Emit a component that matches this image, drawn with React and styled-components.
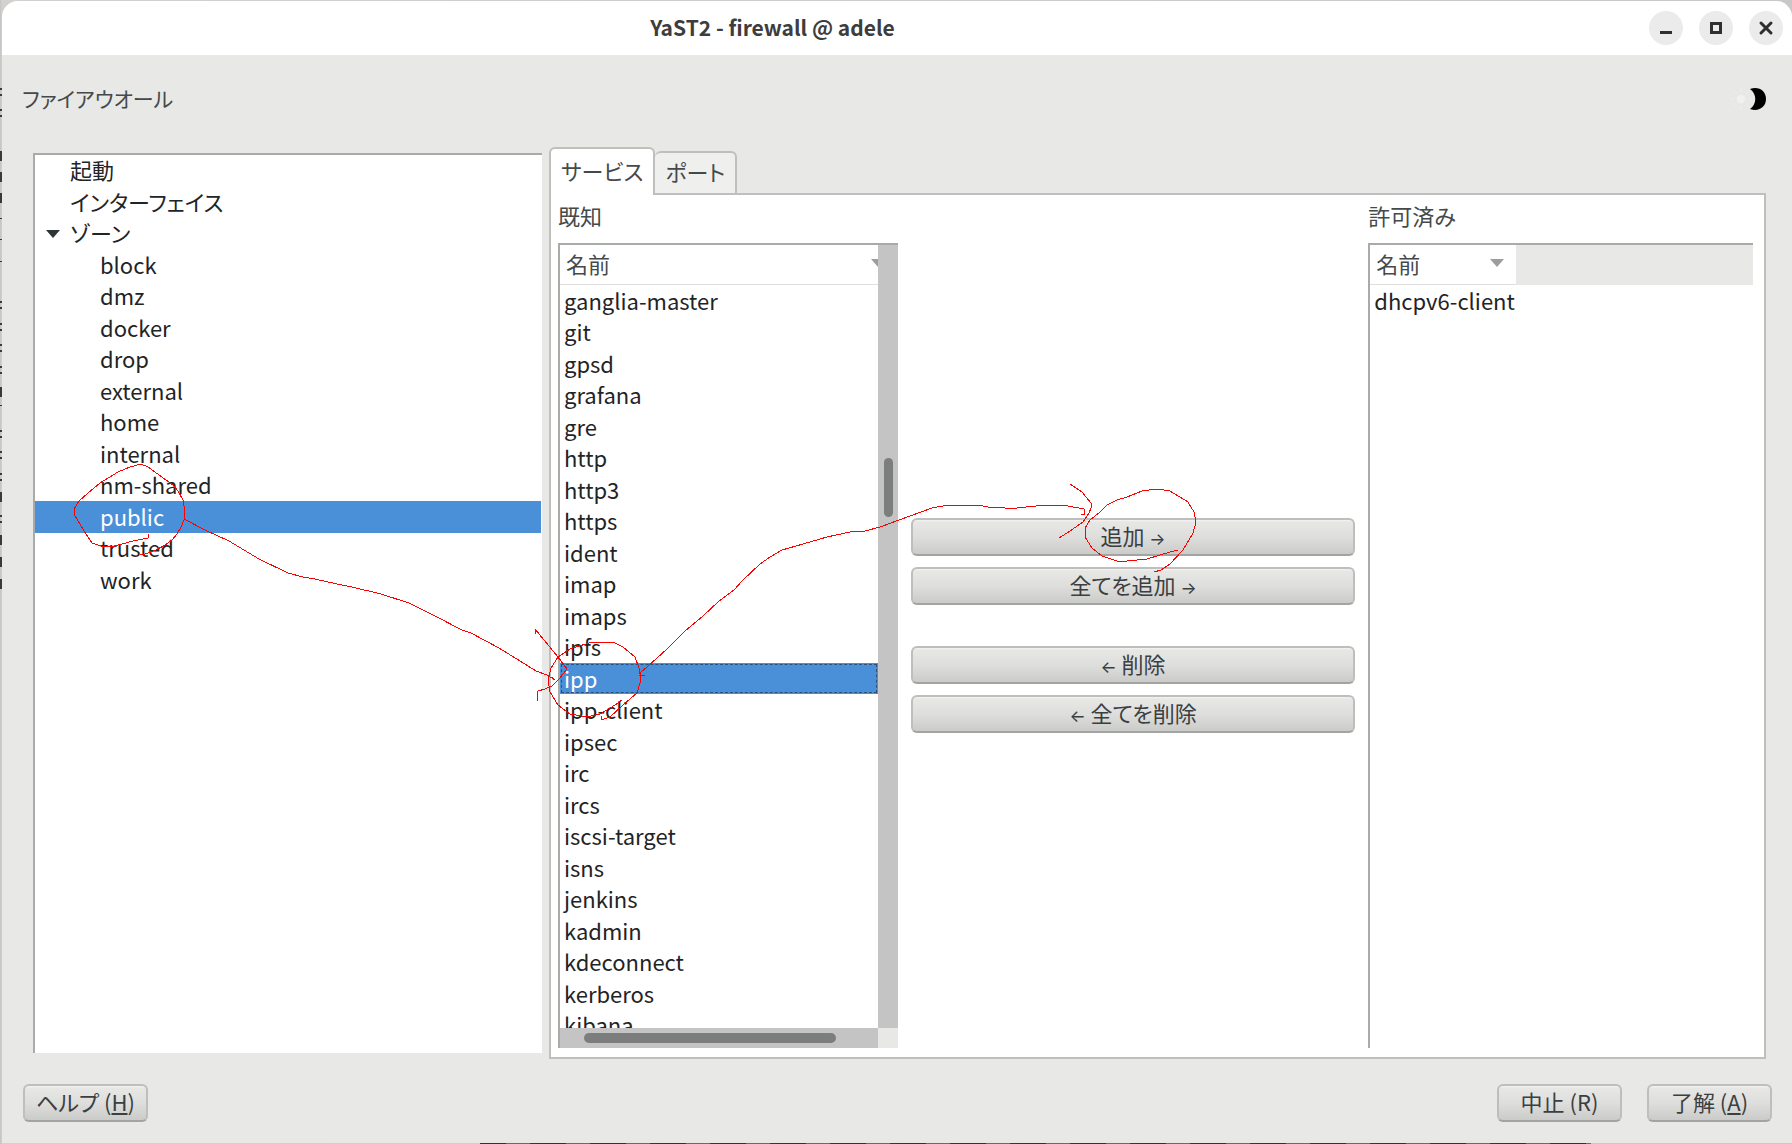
import React, { useState } from "react";
import styled, { createGlobalStyle, css } from "styled-components";

const GlobalStyle = createGlobalStyle`
  *, *::before, *::after { box-sizing: border-box; }
  html, body { margin: 0; padding: 0; }
  body {
    background: #c9c9c8;
    color: #2e3436;
    font-family: "Noto Sans CJK JP", "Noto Sans", sans-serif;
    font-size: 22px;
    line-height: 32px;
    font-feature-settings: "palt";
    overflow: hidden;
  }
  button { font: inherit; font-feature-settings: inherit; color: inherit; }
`;

const line = "#bec0bd";
const surface = "#e8e8e6";

const Desktop = styled.div`
  position: relative;
  height: 100vh;
  padding: 1px 0 1px 2px;
  background: linear-gradient(to right, #c4c3c2, #d2d1d0 2px, #c8c8c7);
`;

const Window = styled.div`
  display: flex;
  flex-direction: column;
  height: 100%;
  background: ${surface};
  border-radius: 16px 16px 0 0;
  overflow: hidden;
`;

const TitleBar = styled.header`
  display: flex;
  align-items: center;
  flex: none;
  height: 54px;
  padding: 0 9px 0 114px;
  background: #fff;
`;

const Title = styled.h1`
  flex: 1;
  margin: 0;
  padding: 0 220px 3px 0;
  text-align: center;
  font-size: 21px;
  font-weight: 700;
  color: #3d3d3d;
`;

const WindowControls = styled.div`
  display: flex;
  gap: 16px;
`;

const RoundButton = styled.button`
  display: grid;
  place-items: center;
  width: 34px;
  height: 34px;
  padding: 0;
  border: 0;
  border-radius: 50%;
  background: #ebebeb;
`;

const Heading = styled.div`
  display: flex;
  align-items: center;
  justify-content: space-between;
  flex: none;
  height: 92px;
  padding: 0 26px 4px 20px;
`;

const HeadingText = styled.h2`
  margin: 0;
  padding-bottom: 3px;
  font-size: 21px;
  font-weight: 400;
  color: #444a4c;
`;

const ThemeButton = styled.button`
  display: flex;
  padding: 0;
  border: 0;
  background: none;
`;

const Main = styled.main`
  display: grid;
  grid-template-columns: 509fr 1217fr;
  gap: 7px;
  flex: 1;
  min-height: 0;
  padding: 0 26px 0 31px;
`;

const Tree = styled.ul`
  margin: 6px 0;
  padding: 0;
  list-style: none;
  background: #fff;
  border: solid #a9aba8;
  border-width: 2px 0 0 2px;
  overflow: hidden;
  color: #1f2426;
`;

const selected = css`
  background: #4a90d9;
  color: #fff;
`;

const TreeRow = styled.li`
  display: flex;
  align-items: center;
  height: 31px;
  margin-right: 1px;
  padding: 0 0 3px ${(p) => (p.$depth ? 65 : 11)}px;
  ${(p) => p.$selected && selected}
  &:nth-child(even) { height: 32px; }
`;

const Twisty = styled.span`
  display: flex;
  width: 24px;
  padding-top: 3px;
`;

const TabArea = styled.section`
  display: flex;
  flex-direction: column;
  min-width: 0;
  min-height: 0;
`;

const TabStrip = styled.div`
  display: flex;
  align-items: flex-end;
  flex: none;
`;

const Tab = styled.button`
  position: relative;
  height: ${(p) => (p.$active ? 48 : 42)}px;
  margin-bottom: ${(p) => (p.$active ? -2 : 0)}px;
  padding: 0 10px 4px;
  border: 2px solid ${line};
  border-width: ${(p) => (p.$active ? "2px 2px 0 2px" : "2px 2px 0 0")};
  border-radius: 6px 6px 0 0;
  background: ${(p) => (p.$active ? "#fff" : "#efefee")};
  color: #444a4c;
  z-index: ${(p) => (p.$active ? 1 : 0)};
`;

const Panel = styled.div`
  display: grid;
  grid-template-columns: 340fr 445fr 385fr;
  gap: 13px;
  flex: 1;
  min-height: 0;
  padding: 6px 11px 9px 7px;
  background: #fff;
  border: 2px solid ${line};
`;

const ListColumn = styled.div`
  display: flex;
  flex-direction: column;
  min-width: 0;
  min-height: 0;
`;

const ListLabel = styled.div`
  flex: none;
  height: 42px;
  line-height: 28px;
  color: #444a4c;
`;

const ListFrame = styled.div`
  display: grid;
  grid-template-columns: 1fr auto;
  grid-template-rows: 1fr auto;
  flex: 1;
  min-height: 0;
  border: solid #a9aba8;
  border-width: 2px 0 0 2px;
`;

const Viewport = styled.div`
  min-width: 0;
  min-height: 0;
  overflow: hidden;
`;

const Table = styled.table`
  width: 100%;
  border-collapse: separate;
  border-spacing: 0;
  color: #1f2426;
`;

const HeadCell = styled.th`
  height: 40px;
  padding: 0;
  background: ${surface};
  text-align: left;
  font-weight: 400;
  color: #444a4c;
`;

const HeadFace = styled.div`
  display: flex;
  align-items: center;
  justify-content: space-between;
  width: ${(p) => p.$width};
  height: 40px;
  padding: 0 0 4px 6px;
  background: #fff;
  border-bottom: 1px solid #dededd;
`;

const SortMark = styled.svg`
  flex: none;
  margin-right: ${(p) => p.$inset}px;
`;

const Row = styled.tr`
  height: 31px;
  &:nth-child(even) { height: 32px; }
  ${(p) => p.$selected && selected}
`;

const Cell = styled.td`
  padding: 0 4px 2px;
  line-height: 28px;
  ${(p) =>
    p.$selected &&
    css`
      outline: 1px dashed #2c4f74;
      outline-offset: -2px;
    `}
`;

const VerticalTrack = styled.div`
  width: 20px;
  padding: 213px 5px 0 6px;
  background: #c3c4c3;
`;

const HorizontalTrack = styled.div`
  height: 20px;
  padding: 5px 42px 5px 24px;
  background: #c3c4c3;
`;

const Thumb = styled.div`
  width: 100%;
  height: ${(p) => p.$length || "100%"};
  border-radius: 5px;
  background: #7b7e7d;
`;

const Corner = styled.div`
  background: ${surface};
`;

const Actions = styled.div`
  display: flex;
  flex-direction: column;
  justify-content: center;
  gap: 11px;
  padding-top: 2px;
`;

const ActionGap = styled.div`
  height: 19px;
`;

const PushButton = styled.button`
  height: 38px;
  min-width: ${(p) => p.$min || 0}px;
  padding: 0 10px 3px;
  border: 2px solid #bebfbd;
  border-bottom-color: #a2a4a1;
  border-radius: 6px;
  background: linear-gradient(#f4f4f3, #e7e7e5 2px, #dededc 50%, #cbcbc9);
  color: #3a4042;
  line-height: 31px;
`;

const Arrow = styled.span`
  font-family: Inter, sans-serif;
  font-size: 17px;
  line-height: 1;
`;

const Footer = styled.footer`
  display: flex;
  align-items: center;
  gap: 25px;
  flex: none;
  height: 84px;
  padding: 4px 20px 0 21px;
`;

const Spacer = styled.div`
  flex: 1;
`;

const Overlay = styled.svg`
  position: absolute;
  left: 0;
  top: 0;
  pointer-events: none;
`;

const BottomEdge = styled.div`
  position: absolute;
  left: 480px;
  right: 201px;
  bottom: 0;
  height: 1px;
  background: repeating-linear-gradient(to right, #2f3433 0 26px, #4d7772 26px 50px, #343635 50px 60px);
`;

const zones = ["block", "dmz", "docker", "drop", "external", "home", "internal", "nm-shared", "public", "trusted", "work"];

const services = [
  "ganglia-master", "git", "gpsd", "grafana", "gre", "http", "http3", "https",
  "ident", "imap", "imaps", "ipfs", "ipp", "ipp-client", "ipsec", "irc", "ircs",
  "iscsi-target", "isns", "jenkins", "kadmin", "kdeconnect", "kerberos", "kibana",
];

const strokes = [
  "148,534 148,538 133,541 111,547 101,546 92,543 86,534 78,521 74,514 74,509 79,501 88,493 100,483 118,472 130,467 141,464 148,467 166,480 173,485 178,491 183,500 185,511 184,520 181,527 177,534 172,540 165,545 156,550 145,554 140,554",
  "184,519 205,530 229,541 259,559 288,573 303,577 315,579 337,584 352,587 381,594 409,603 435,616 462,630 471,633 499,648 520,661 536,671 547,675 555,680 552,677",
  "535,634 535,629 558,657 567,669 559,679 552,686 545,689 538,691 537,701",
  "622,700 615,705 600,714 587,717 570,714 558,705 550,692 548,680 551,668 558,657 570,649 592,642 613,642 623,647 635,657 639,668 641,680 637,693 623,705 610,717 601,720 601,716",
  "645,675 640,675 641,672 647,667 667,649 685,631 703,616 718,602 735,589 742,581 760,564 770,557 782,550 803,544 827,537 850,532 865,531 880,527 910,516 932,508 948,505 977,505 988,507 1005,508 1017,508 1045,505 1068,506 1084,509 1084,514 1081,514",
  "1070,484 1082,492 1091,503 1091,508 1089,513 1083,522 1070,531 1059,538",
  "1178,550 1170,552 1147,559 1127,561 1117,561 1102,556 1092,548 1085,537 1085,528 1090,520 1100,512 1107,505 1117,500 1127,497 1142,491 1157,489 1170,491 1188,502 1194,512 1196,522 1193,533 1183,550 1170,564 1161,570 1154,572",
];

const glyphEdges = [
  [92, "c"], [113, "c"], [156, "i"], [177, "i"], [198, "i"], [219, "-"], [240, "-"], [262, "-"],
  [305, "c"], [327, "c"], [348, "c"], [370, "c"], [392, "i"], [406, "-"], [434, "c"], [455, "c"],
  [477, "c"], [497, "i"], [519, "c"], [540, "i"], [562, "i"], [584, "i"],
];

const edgePath = {
  c: (y) => `M0 ${y - 4}h2v2h-2zM0 ${y + 2}h2v2h-2z`,
  i: (y) => `M0 ${y - 5}h2v10h-2z`,
  "-": (y) => `M0 ${y - 1}h2v1h-2z`,
};

function SortArrow({ inset }) {
  return (
    <SortMark $inset={inset} width="14" height="8" viewBox="0 0 14 8" aria-hidden="true">
      <path d="M0 0h14L7 8z" fill="#9b9e9d" />
    </SortMark>
  );
}

function ServiceTable({ rows, current, headWidth, arrowInset, label }) {
  return (
    <Table aria-label={label}>
      <thead>
        <tr>
          <HeadCell scope="col">
            <HeadFace $width={headWidth}>
              名前
              <SortArrow inset={arrowInset} />
            </HeadFace>
          </HeadCell>
        </tr>
      </thead>
      <tbody>
        {rows.map((name) => (
          <Row key={name} $selected={name === current}>
            <Cell $selected={name === current}>{name}</Cell>
          </Row>
        ))}
      </tbody>
    </Table>
  );
}

export default function App() {
  const [zone, setZone] = useState("public");
  return (
    <Desktop>
      <GlobalStyle />
      <Window>
        <TitleBar>
          <Title>YaST2 - firewall @ adele</Title>
          <WindowControls>
            <RoundButton aria-label="最小化">
              <svg width="34" height="34"><path d="M11 20h12v3H11z" fill="#2f2f2f" /></svg>
            </RoundButton>
            <RoundButton aria-label="最大化">
              <svg width="34" height="34"><path d="M11 11h12v12H11zM14 14v6h6v-6z" fillRule="evenodd" fill="#2f2f2f" /></svg>
            </RoundButton>
            <RoundButton aria-label="閉じる">
              <svg width="34" height="34"><path d="M12 12l10 10M22 12L12 22" stroke="#2f2f2f" strokeWidth="3" strokeLinecap="round" /></svg>
            </RoundButton>
          </WindowControls>
        </TitleBar>

        <Heading>
          <HeadingText>ファイアウオール</HeadingText>
          <ThemeButton aria-label="テーマ切替">
            <svg width="36" height="24" viewBox="0 0 36 24">
              <g stroke="#f0f0ef" strokeWidth="1" strokeLinecap="round">
                <circle cx="11" cy="12" r="4" fill="#f1f1f1" />
                <path d="M11 2v2M11 20v2M1 12h2M19 12h2M4 5l1 1M17 18l1 1M4 19l1-1M17 6l1-1" />
              </g>
              <path d="M20 2C29 -1 36 4 36 12S29 25 20 22C27 17 27 7 20 2z" fill="#000" />
            </svg>
          </ThemeButton>
        </Heading>

        <Main>
          <Tree role="tree">
            <TreeRow role="treeitem"><Twisty />起動</TreeRow>
            <TreeRow role="treeitem"><Twisty />インターフェイス</TreeRow>
            <TreeRow role="treeitem" aria-expanded="true">
              <Twisty>
                <svg width="14" height="8"><path d="M0 0h14L7 8z" fill="#2e3436" /></svg>
              </Twisty>
              ゾーン
            </TreeRow>
            {zones.map((name) => (
              <TreeRow
                key={name}
                role="treeitem"
                aria-selected={name === zone}
                $depth
                $selected={name === zone}
                onClick={() => setZone(name)}
              >
                {name}
              </TreeRow>
            ))}
          </Tree>

          <TabArea>
            <TabStrip role="tablist">
              <Tab role="tab" aria-selected="true" $active>サービス</Tab>
              <Tab role="tab" aria-selected="false">ポート</Tab>
            </TabStrip>
            <Panel role="tabpanel">
              <ListColumn>
                <ListLabel>既知</ListLabel>
                <ListFrame>
                  <Viewport>
                    <ServiceTable rows={services} current="ipp" headWidth="100%" arrowInset={-7} label="既知" />
                  </Viewport>
                  <VerticalTrack><Thumb $length="59px" /></VerticalTrack>
                  <HorizontalTrack><Thumb /></HorizontalTrack>
                  <Corner />
                </ListFrame>
              </ListColumn>
              <Actions>
                <PushButton>追加 <Arrow>→</Arrow></PushButton>
                <PushButton>全てを追加 <Arrow>→</Arrow></PushButton>
                <ActionGap />
                <PushButton><Arrow>←</Arrow> 削除</PushButton>
                <PushButton><Arrow>←</Arrow> 全てを削除</PushButton>
              </Actions>
              <ListColumn>
                <ListLabel>許可済み</ListLabel>
                <ListFrame>
                  <Viewport>
                    <ServiceTable rows={["dhcpv6-client"]} headWidth="146px" arrowInset={12} label="許可済み" />
                  </Viewport>
                </ListFrame>
              </ListColumn>
            </Panel>
          </TabArea>
        </Main>

        <Footer>
          <PushButton $min={125}>ヘルプ (<u>H</u>)</PushButton>
          <Spacer />
          <PushButton $min={125}>中止 (R)</PushButton>
          <PushButton $min={125}>了解 (<u>A</u>)</PushButton>
        </Footer>
      </Window>

      <Overlay width="2" height="760" aria-hidden="true">
        {glyphEdges.map(([y, kind]) => (
          <path key={y} d={edgePath[kind](y)} fill="#3a3a3a" />
        ))}
      </Overlay>
      <BottomEdge />
      <Overlay width="1300" height="760" fill="none" stroke="#f00" strokeWidth="1" shapeRendering="crispEdges" aria-hidden="true">
        {strokes.map((points) => <polyline key={points} points={points} />)}
      </Overlay>
    </Desktop>
  );
}
